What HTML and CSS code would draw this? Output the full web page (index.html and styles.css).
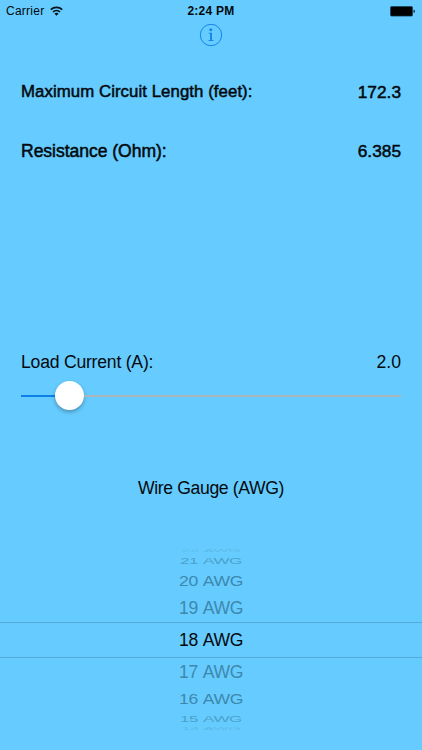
FILE: index.html
```html
<!DOCTYPE html>
<html lang="en">
<head>
    <meta charset="UTF-8">
    <meta name="viewport" content="width=device-width, initial-scale=1.0">
    <title>Wire Gauge</title>
    <link rel="stylesheet" href="styles.css">
</head>
<body>
    <header class="status-bar">
        <div class="carrier">
            <span>Carrier</span>
            <svg class="wifi" width="13" height="10" viewBox="0 0 13 10">
                <path d="M.8 3.6C3.9.6 9.1.6 12.2 3.6M3 6C5 4.1 8 4.1 10 6" fill="none" stroke="#06131c" stroke-width="1.7"/>
                <path d="M4.4 7.5Q6.5 5.9 8.6 7.5L6.5 9.7Z" fill="#06131c"/>
            </svg>
        </div>
        <div class="time">2:24 PM</div>
        <svg class="battery" width="26" height="11" viewBox="0 0 26 11">
            <rect x=".5" y=".5" width="22" height="9.6" rx="1" fill="#000" stroke="#164057" stroke-width=".7"/>
            <path d="M23.5 3.8h.6q.7 0 .7 1.5t-.7 1.5h-.6z" fill="#123"/>
        </svg>
    </header>

    <main>
        <button class="info" type="button" aria-label="Info">
            <svg width="24" height="24" viewBox="0 0 24 24">
                <circle cx="12" cy="12" r="10.7" fill="none" stroke="#1583ea" stroke-width="1"/>
                <circle cx="11.8" cy="6.7" r="1.5" fill="#1583ea"/>
                <path d="M9.8 9.8h3.2v7.3h1.3v1H9.6v-1h1.5v-6.3H9.8z" fill="#1583ea"/>
            </svg>
        </button>

        <div class="row result">
            <span class="label-length">Maximum Circuit Length (feet):</span>
            <span class="value">172.3</span>
        </div>
        <div class="row result">
            <span class="label-resistance">Resistance (Ohm):</span>
            <span class="value">6.385</span>
        </div>

        <div class="row current">
            <span class="label-current">Load Current (A):</span>
            <span>2.0</span>
        </div>
        <div class="slider">
            <div class="track-fill"></div>
            <div class="thumb"></div>
            <div class="track"></div>
        </div>

        <h2>Wire Gauge (AWG)</h2>
        <div class="picker">
            <div class="option far-top"><span>22 AWG</span></div>
            <div class="option third-top"><span>21 AWG</span></div>
            <div class="option second-top"><span>20 AWG</span></div>
            <div class="option first"><span>19 AWG</span></div>
            <div class="option selected"><span>18 AWG</span></div>
            <div class="option first"><span>17 AWG</span></div>
            <div class="option second"><span>16 AWG</span></div>
            <div class="option third"><span>15 AWG</span></div>
            <div class="option far"><span>14 AWG</span></div>
        </div>
    </main>
</body>
</html>
```
FILE: styles.css
```css
* {
    margin: 0;
    padding: 0;
    box-sizing: border-box;
}
body {
    width: 422px;
    height: 750px;
    overflow: hidden;
    background: #66ccff;
    color: #03090d;
    font-family: "Liberation Sans", Arial, sans-serif;
    font-size: 17.6px;
}
.status-bar {
    display: grid;
    grid-template-columns: 1fr auto 1fr;
    align-items: center;
    height: 22px;
    padding: 0 6px;
    font-size: 12px;
}
.carrier {
    display: flex;
    align-items: center;
    gap: 6px;
    letter-spacing: 0.25px;
}
.time {
    font-weight: bold;
    letter-spacing: 0.25px;
}
.battery {
    justify-self: end;
}
.info {
    display: block;
    width: 24px;
    height: 24px;
    margin: 1px auto 35px;
    border: none;
    background: none;
}
.info svg {
    display: block;
}
.row {
    display: flex;
    justify-content: space-between;
    align-items: center;
    height: 20px;
    margin: 0 21px;
}
/* medium weight */
.result {
    margin-bottom: 39px;
    -webkit-text-stroke: 0.5px #03090d;
}
.label-length {
    font-size: 16.8px;
    letter-spacing: 0.07px;
}
.label-resistance {
    letter-spacing: -0.06px;
}
.value {
    font-size: 17.3px;
}
.current {
    margin-top: 191px;
}
.label-current {
    letter-spacing: -0.22px;
}
.slider {
    display: flex;
    align-items: center;
    height: 30px;
    margin: 9px 21px 0;
}
.track-fill {
    width: 34px;
    height: 2px;
    background: #0f7fe8;
}
.thumb {
    width: 29px;
    height: 29px;
    margin-top: -2px;
    border-radius: 50%;
    background: #fff;
    box-shadow: 0 2px 4px rgba(0, 0, 0, 0.3);
}
.track {
    flex: 1;
    height: 2px;
    background: #a9b5bb;
}
h2 {
    height: 20px;
    margin-top: 67px;
    font-size: 17.6px;
    font-weight: normal;
    letter-spacing: -0.35px;
    line-height: 20px;
    text-align: center;
}
.picker {
    margin-top: 49px;
}
.option {
    display: flex;
    justify-content: center;
    align-items: center;
    height: 28px;
    color: #3d88ae;
    letter-spacing: -0.4px;
    line-height: 20px;
    word-spacing: 1.5px;
}
.option.selected {
    height: 36px;
    border-top: 1px solid #55aad5;
    border-bottom: 1px solid #55aad5;
    color: #03090d;
}
.second-top {
    height: 27px;
}
.second {
    height: 26px;
}
.second-top span,
.second span {
    transform: scaleY(0.8);
}
.third-top {
    height: 12px;
}
.third {
    height: 14px;
}
.third-top span,
.third span {
    color: #4ca1cb;
    transform: scale(0.97, 0.5);
}
.far-top {
    height: 8px;
}
.far {
    height: 5px;
}
.far-top span,
.far span {
    color: #5bbbea;
    transform: scale(0.92, 0.18);
}
```
